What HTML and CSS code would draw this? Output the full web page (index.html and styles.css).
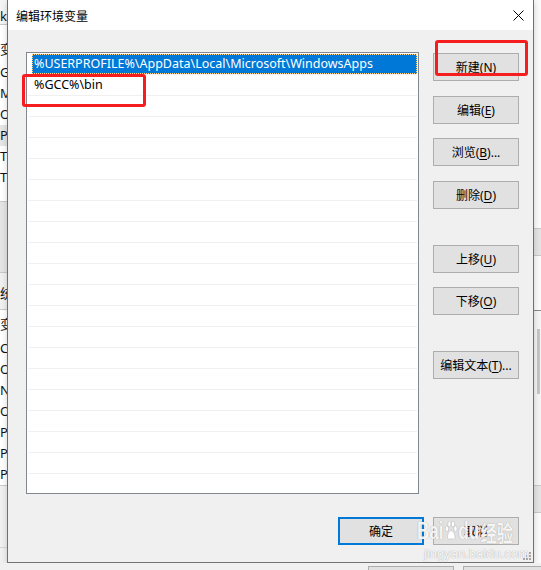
FILE: index.html
```html
<!DOCTYPE html>
<html lang="zh-CN">
<head>
  <meta charset="UTF-8">
  <title>编辑环境变量</title>
  <link rel="stylesheet" href="styles.css">
</head>
<body>
<div class="desk">
  <!-- 后面那个环境变量窗口，只露出左边一条 -->
  <div class="back-left">
    <div class="bl-head">k</div>
    <div class="bl-list bl-list1">
      <div class="bl-top">变</div>
      <div class="bl-row">GC</div>
      <div class="bl-row">M</div>
      <div class="bl-row">O</div>
      <div class="bl-row bl-sel">Pa</div>
      <div class="bl-row">TE</div>
      <div class="bl-row">TM</div>
    </div>
    <div class="bl-gap"></div>
    <div class="bl-label">统</div>
    <div class="bl-list bl-list2">
      <div class="bl-top">变</div>
      <div class="bl-row">Co</div>
      <div class="bl-row">Or</div>
      <div class="bl-row">NI</div>
      <div class="bl-row">O</div>
      <div class="bl-row">Pa</div>
      <div class="bl-row">PA</div>
      <div class="bl-row">PR</div>
    </div>
    <div class="bl-foot"></div>
  </div>

  <div class="dialog">
    <div class="title-bar">
      <span class="title">编辑环境变量</span>
      <svg class="close" width="11" height="11" viewBox="0 0 11 11">
        <path d="M0.5 0.5 L10.5 10.5 M10.5 0.5 L0.5 10.5" stroke="#000" stroke-width="1" fill="none"/>
      </svg>
    </div>
    <div class="dlg-body">
      <div class="main">
        <div class="path-list">
          <div class="path-row selected"><span>%USERPROFILE%\AppData\Local\Microsoft\WindowsApps</span></div>
          <div class="path-row"><span>%GCC%\bin</span></div>
          <div class="path-row"></div>
          <div class="path-row"></div>
          <div class="path-row"></div>
          <div class="path-row"></div>
          <div class="path-row"></div>
          <div class="path-row"></div>
          <div class="path-row"></div>
          <div class="path-row"></div>
          <div class="path-row"></div>
          <div class="path-row"></div>
          <div class="path-row"></div>
          <div class="path-row"></div>
          <div class="path-row"></div>
          <div class="path-row"></div>
          <div class="path-row"></div>
          <div class="path-row"></div>
          <div class="path-row"></div>
          <div class="path-row"></div>
          <div class="path-row"></div>
        </div>
        <div class="side">
          <div class="btn-group">
            <button class="btn">新建(<u>N</u>)</button>
            <button class="btn">编辑(<u>E</u>)</button>
            <button class="btn">浏览(<u>B</u>)...</button>
            <button class="btn">删除(<u>D</u>)</button>
          </div>
          <div class="btn-group pair">
            <button class="btn">上移(<u>U</u>)</button>
            <button class="btn">下移(<u>O</u>)</button>
          </div>
          <div class="btn-group">
            <button class="btn">编辑文本(<u>T</u>)...</button>
          </div>
        </div>
      </div>
      <div class="footer">
        <button class="btn btn-default">确定</button>
        <button class="btn">取消</button>
      </div>
    </div>

    <svg class="grip" width="9" height="9" viewBox="0 0 9 9">
      <rect x="6" y="0" width="2" height="2" fill="#a6a6a6"/>
      <rect x="3" y="3" width="2" height="2" fill="#a6a6a6"/>
      <rect x="6" y="3" width="2" height="2" fill="#a6a6a6"/>
      <rect x="0" y="6" width="2" height="2" fill="#a6a6a6"/>
      <rect x="3" y="6" width="2" height="2" fill="#a6a6a6"/>
      <rect x="6" y="6" width="2" height="2" fill="#a6a6a6"/>
    </svg>

    <!-- 截图上画的红框 -->
    <div class="mark mark-path"></div>
    <div class="mark mark-new"></div>

    <!-- 百度经验水印 -->
    <div class="watermark">
      <div class="wm-logo">
        <span>Bai</span>
        <svg class="paw" width="18" height="20" viewBox="0 0 16 18">
          <ellipse cx="3" cy="7" rx="2" ry="2.6" fill="#fff" stroke="#bbb" stroke-width="0.6"/>
          <ellipse cx="6" cy="2.8" rx="2" ry="2.6" fill="#fff" stroke="#bbb" stroke-width="0.6"/>
          <ellipse cx="10.4" cy="2.8" rx="2" ry="2.6" fill="#fff" stroke="#bbb" stroke-width="0.6"/>
          <ellipse cx="13.4" cy="7" rx="2" ry="2.6" fill="#fff" stroke="#bbb" stroke-width="0.6"/>
          <path d="M8.2 8.6 C5.4 8.6 3.4 12.6 3.6 14.6 C3.8 16.8 6 16.6 8.2 16 C10.4 16.6 12.6 16.8 12.8 14.6 C13 12.6 11 8.6 8.2 8.6 Z" fill="#fff" stroke="#bbb" stroke-width="0.6"/>
        </svg>
        <span>du</span><span class="wm-cn">经验</span>
      </div>
      <div class="wm-url">jingyan.baidu.com</div>
    </div>
  </div>

  <div class="back-right">
    <div class="br-band br-a"></div>
    <div class="br-band br-b"></div>
    <div class="br-scroll"><div class="br-thumb"></div></div>
    <div class="br-band br-c"></div>
  </div>
</div>
<div class="back-bottom">
  <div class="bb-btn bb-1"></div>
  <div class="bb-btn bb-2"></div>
</div>
</body>
</html>
```

FILE: styles.css
```css
* {
  box-sizing: border-box;
}
body {
  margin: 0;
  width: 541px;
  height: 570px;
  overflow: hidden;
  background: #f0f0f0;
  font-family: "Noto Sans", "Noto Sans CJK SC", sans-serif;
  font-size: 12px;
  color: #000;
}
.desk {
  display: flex;
  height: 563px;
}

/* 左边露出来的旧窗口 */
.back-left {
  width: 7px;
  overflow: hidden;
  white-space: nowrap;
  background: #f0f0f0;
  font-size: 13px;
  color: #111;
}
.bl-head {
  height: 24px;
  padding-top: 6px;
  line-height: 20px;
  background: #f4f4f4;
}
.bl-list {
  background: #fff;
  border-top: 1px solid #c9c9c9;
  border-bottom: 1px solid #c9c9c9;
}
.bl-list1 {
  height: 178px;
  padding-top: 13px;
}
.bl-list2 {
  height: 177px;
}
.bl-top {
  height: 24px;
  line-height: 22px;
}
.bl-list2 .bl-top {
  height: 28px;
  line-height: 28px;
}
.bl-row {
  height: 21px;
  line-height: 21px;
}
.bl-sel {
  background: #e5e5e5;
}
.bl-gap {
  height: 71px;
  background: #e4e4e4;
  border-bottom: 1px solid #c9c9c9;
}
.bl-label {
  height: 36px;
  line-height: 40px;
}
.bl-foot {
  height: 62px;
  border-bottom: 1px solid #d6d6d6;
}

/* 对话框 */
.dialog {
  position: relative;
  width: 527px;
  height: 563px;
  background: #f0f0f0;
  border: 1px solid #707070;
  border-top: none;
  box-shadow: 0 2px 6px rgba(0,0,0,0.18);
}
.title-bar {
  display: flex;
  align-items: center;
  justify-content: space-between;
  height: 30px;
  background: #fff;
  padding: 0 9px 0 8px;
}
.title {
  font-size: 12px;
  padding-top: 1px;
}
.close {
  margin-top: 1px;
}
.dlg-body {
  padding: 22px 14px 0 18px;
}
.main {
  display: flex;
  gap: 14px;
}
.path-list {
  width: 393px;
  height: 442px;
  background: #fff;
  border: 1px solid #828790;
  padding: 1px;
  overflow: hidden;
}
.path-row {
  height: 21px;
  border-bottom: 1px solid #f0f0f0;
  line-height: 20px;
  font-size: 12.5px;
  white-space: nowrap;
}
.path-row span {
  display: block;
  height: 20px;
  margin-left: 4px;
  padding-left: 2px;
}
.path-row.selected span {
  background: #0078d7;
  color: #fff;
  outline: 1px dotted #ffd38c;
  outline-offset: -1px;
}
.side {
  display: flex;
  flex-direction: column;
  gap: 36px;
  padding-top: 1px;
  width: 86px;
}
.btn-group {
  display: flex;
  flex-direction: column;
  gap: 14.67px;
}
.btn-group.pair {
  gap: 14px;
}
.btn {
  width: 86px;
  height: 28px;
  padding: 0;
  border: 1px solid #adadad;
  background: #e1e1e1;
  font: inherit;
  color: #000;
}
.btn u {
  text-underline-offset: 2px;
}
.btn-default {
  border: 2px solid #0078d7;
}
.footer {
  display: flex;
  justify-content: flex-end;
  gap: 9px;
  margin-top: 23px;
}
.grip {
  position: absolute;
  left: 515px;
  top: 552px;
}

/* 红框标注 */
.mark {
  position: absolute;
  border: 3px solid #f51d1d;
  border-radius: 3px;
}
.mark-path {
  left: 14px;
  top: 74px;
  width: 124px;
  height: 33px;
}
.mark-new {
  left: 427px;
  top: 40px;
  width: 93px;
  height: 36px;
}

/* 水印 */
.watermark {
  position: absolute;
  left: 409px;
  top: 518px;
  width: max-content;
  white-space: nowrap;
  color: rgba(255,255,255,0.92);
  text-shadow: 0 0 1px rgba(90,90,90,0.6);
  pointer-events: none;
}
.wm-logo {
  display: flex;
  align-items: center;
  font-family: "Liberation Sans", sans-serif;
  font-weight: bold;
  font-size: 23px;
  line-height: 26px;
  transform: scaleX(0.74);
  transform-origin: left center;
}
.paw {
  margin: 0 1px;
}
.wm-cn {
  font-family: "Noto Sans CJK SC", sans-serif;
  font-size: 22px;
  margin-left: 2px;
}
.wm-url {
  font-family: "Liberation Sans", sans-serif;
  font-size: 13px;
  line-height: 14px;
  margin-top: 3px;
  padding-left: 7px;
}

/* 右边露出来的窗口 */
.back-right {
  flex: 1;
  background: #fafafa;
  padding-top: 228px;
}
.br-band {
  background: #e3e3e3;
  border-top: 1px solid #c8c8c8;
  border-bottom: 1px solid #c8c8c8;
}
.br-a {
  height: 28px;
}
.br-b {
  height: 1px;
  margin-top: 54px;
  border: none;
  background: #8a8a8a;
}
.br-scroll {
  height: 174px;
  padding: 18px 1px 0 3px;
  background: #f4f4f4;
}
.br-thumb {
  height: 65px;
  background: #c6c6c6;
}
.br-c {
  height: 28px;
}

.back-bottom {
  position: relative;
  height: 7px;
  background: #f0f0f0;
}
.bb-btn {
  position: absolute;
  top: 3px;
  height: 10px;
  border: 1px solid #adadad;
  background: #e1e1e1;
}
.bb-1 {
  left: 368px;
  width: 86px;
}
.bb-2 {
  left: 463px;
  width: 86px;
}
```
